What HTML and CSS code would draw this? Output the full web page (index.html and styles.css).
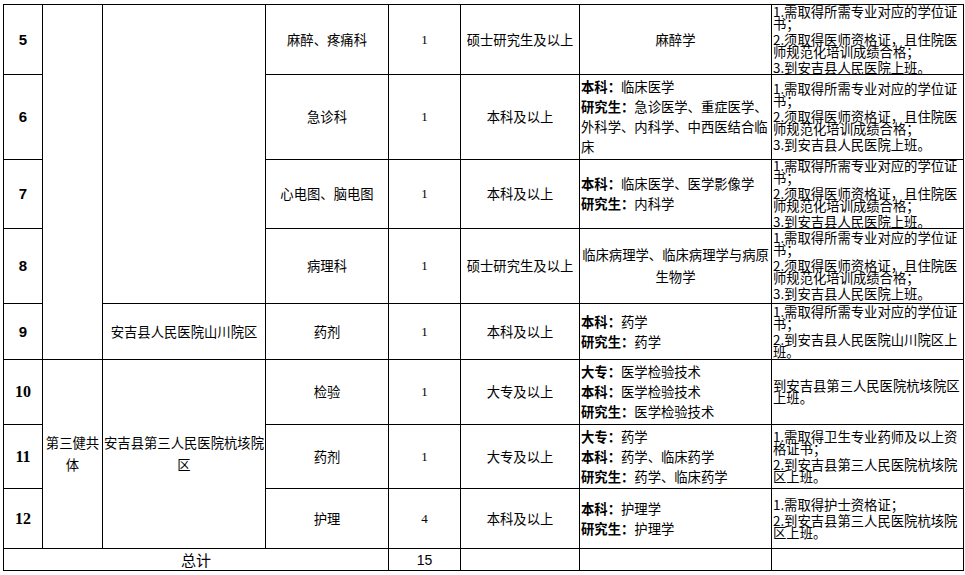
FILE: index.html
```html
<!DOCTYPE html>
<html lang="zh-CN">
<head>
<meta charset="utf-8">
<title>招聘计划表</title>
<link rel="stylesheet" href="styles.css">
</head>
<body>
<table class="plan">
  <colgroup>
    <col class="c1"><col class="c2"><col class="c3"><col class="c4"><col class="c5"><col class="c6"><col class="c7"><col class="c8">
  </colgroup>
  <tbody>
    <tr class="r5">
      <td class="num">5</td>
      <td rowspan="5"></td>
      <td rowspan="4"></td>
      <td>麻醉、疼痛科</td>
      <td class="cnt">1</td>
      <td>硕士研究生及以上</td>
      <td>麻醉学</td>
      <td class="req"><p>1.需取得所需专业对应的学位证书；</p><p>2.须取得医师资格证，且住院医师规范化培训成绩合格；</p><p>3.到安吉县人民医院上班。</p></td>
    </tr>
    <tr class="r6">
      <td class="num">6</td>
      <td>急诊科</td>
      <td class="cnt">1</td>
      <td>本科及以上</td>
      <td class="major"><p><b>本科：</b>临床医学</p><p><b>研究生：</b>急诊医学、重症医学、外科学、内科学、中西医结合临床</p></td>
      <td class="req"><p>1.需取得所需专业对应的学位证书；</p><p>2.须取得医师资格证，且住院医师规范化培训成绩合格；</p><p>3.到安吉县人民医院上班。</p></td>
    </tr>
    <tr class="r7">
      <td class="num">7</td>
      <td>心电图、脑电图</td>
      <td class="cnt">1</td>
      <td>本科及以上</td>
      <td class="major"><p><b>本科：</b>临床医学、医学影像学</p><p><b>研究生：</b>内科学</p></td>
      <td class="req"><p>1.需取得所需专业对应的学位证书；</p><p>2.须取得医师资格证，且住院医师规范化培训成绩合格；</p><p>3.到安吉县人民医院上班。</p></td>
    </tr>
    <tr class="r8">
      <td class="num">8</td>
      <td>病理科</td>
      <td class="cnt">1</td>
      <td>硕士研究生及以上</td>
      <td class="wide">临床病理学、临床病理学与病原生物学</td>
      <td class="req"><p>1.需取得所需专业对应的学位证书；</p><p>2.须取得医师资格证，且住院医师规范化培训成绩合格；</p><p>3.到安吉县人民医院上班。</p></td>
    </tr>
    <tr class="r9">
      <td class="num">9</td>
      <td>安吉县人民医院山川院区</td>
      <td>药剂</td>
      <td class="cnt">1</td>
      <td>本科及以上</td>
      <td class="major"><p><b>本科：</b>药学</p><p><b>研究生：</b>药学</p></td>
      <td class="req"><p>1.需取得所需专业对应的学位证书；</p><p>2.到安吉县人民医院山川院区上班。</p></td>
    </tr>
    <tr class="r10">
      <td class="num serif">10</td>
      <td rowspan="3" class="tall">第三健共体</td>
      <td rowspan="3" class="tall">安吉县第三人民医院杭垓院区</td>
      <td>检验</td>
      <td class="cnt">1</td>
      <td>大专及以上</td>
      <td class="major"><p><b>大专：</b>医学检验技术</p><p><b>本科：</b>医学检验技术</p><p><b>研究生：</b>医学检验技术</p></td>
      <td class="req"><p>到安吉县第三人民医院杭垓院区上班。</p></td>
    </tr>
    <tr class="r11">
      <td class="num serif">11</td>
      <td>药剂</td>
      <td class="cnt">1</td>
      <td>大专及以上</td>
      <td class="major"><p><b>大专：</b>药学</p><p><b>本科：</b>药学、临床药学</p><p><b>研究生：</b>药学、临床药学</p></td>
      <td class="req"><p>1.需取得卫生专业药师及以上资格证书；</p><p>2.到安吉县第三人民医院杭垓院区上班。</p></td>
    </tr>
    <tr class="r12">
      <td class="num serif">12</td>
      <td>护理</td>
      <td class="cnt">4</td>
      <td>本科及以上</td>
      <td class="major"><p><b>本科：</b>护理学</p><p><b>研究生：</b>护理学</p></td>
      <td class="req"><p>1.需取得护士资格证；</p><p>2.到安吉县第三人民医院杭垓院区上班。</p></td>
    </tr>
    <tr class="rt">
      <td colspan="4" class="total">总计</td>
      <td class="sum">15</td>
      <td></td>
      <td></td>
      <td></td>
    </tr>
  </tbody>
</table>
</body>
</html>
```

FILE: styles.css
```css
html, body {
  margin: 0;
  background: #fff;
}
body {
  padding: 4px 0 0 3px;
  font-family: "Noto Sans CJK SC", "Noto Sans", sans-serif;
  font-size: 13.33px;
  color: #000;
}
.plan {
  border-collapse: collapse;
  table-layout: fixed;
  width: 960px;
}
.c1 { width: 39px; }
.c2 { width: 60px; }
.c3 { width: 163px; }
.c4 { width: 123px; }
.c5 { width: 72px; }
.c6 { width: 119px; }
.c7 { width: 192px; }
.c8 { width: 192px; }
.plan td {
  border: 1px solid #000;
  padding: 0;
  text-align: center;
  vertical-align: middle;
  line-height: 20px;
}
.plan td p {
  margin: 0;
}
.r5 { height: 70px; }
.r6 { height: 85px; }
.r7 { height: 68px; }
.r8 { height: 75px; }
.r9 { height: 56px; }
.r10 { height: 65px; }
.r11 { height: 64px; }
.r12 { height: 60px; }
.rt { height: 22px; }
.plan td.num {
  font-family: "Liberation Sans", Arial, sans-serif;
  font-weight: bold;
  font-size: 15px;
}
.plan td.num.serif {
  font-family: "Liberation Serif", "Times New Roman", serif;
  font-size: 16px;
}
.plan td.cnt {
  font-family: "Liberation Serif", "Times New Roman", serif;
  font-size: 13px;
}
.plan td.major {
  text-align: left;
  padding-left: 1px;
}
.plan td.major b {
  font-weight: bold;
}
.plan td.wide {
  line-height: 22px;
}
.plan td.tall {
  line-height: 22px;
}
.plan td.req {
  text-align: left;
  padding-left: 1px;
  line-height: 12px;
}
.plan td.req p + p {
  margin-top: 4px;
}
.plan td.total {
  font-size: 15px;
}
.plan td.sum {
  font-family: "Liberation Sans", Arial, sans-serif;
  font-size: 14px;
}
```
